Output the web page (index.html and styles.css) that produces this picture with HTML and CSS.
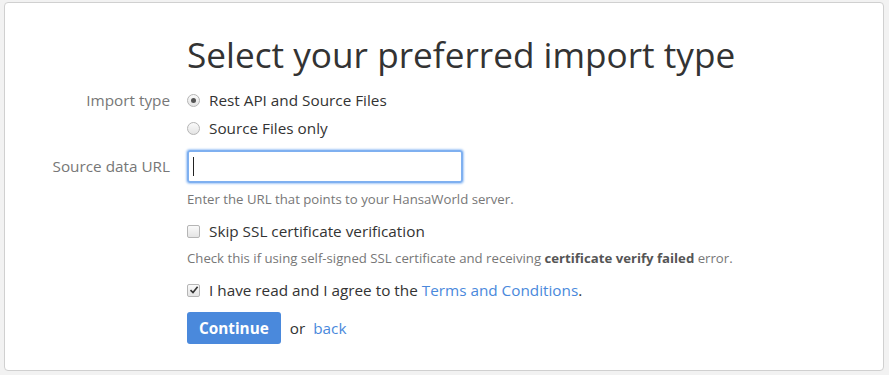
FILE: index.html
```html
<!doctype html>
<html lang="en">
<head>
    <meta charset="UTF-8">
    <meta name="viewport" content="width=device-width, initial-scale=1.0">
    <title>Import type</title>
    <link rel="stylesheet" href="styles.css">
</head>
<body>
    <div class="card">
        <form class="import-form">
            <div class="row">
                <div class="label"></div>
                <h1 class="title">Select your preferred import type</h1>
            </div>

            <div class="row">
                <div class="label label-choice">Import type</div>
                <div class="controls">
                    <label class="choice"><span class="radio checked"></span>Rest API and Source Files</label>
                    <label class="choice"><span class="radio"></span>Source Files only</label>
                </div>
            </div>

            <div class="row row-input">
                <div class="label label-input">Source data URL</div>
                <div class="controls">
                    <div class="text-input"><span class="caret"></span></div>
                    <p class="help">Enter the URL that points to your HansaWorld server.</p>
                </div>
            </div>

            <div class="row">
                <div class="label"></div>
                <div class="controls">
                    <label class="choice"><span class="checkbox"></span>Skip SSL certificate verification</label>
                    <p class="help help-after">Check this if using self-signed SSL certificate and receiving <b>certificate verify failed</b> error.</p>
                </div>
            </div>

            <div class="row">
                <div class="label"></div>
                <div class="controls">
                    <label class="choice"><span class="checkbox">
                        <svg width="10" height="10" viewBox="0 0 10 10"><path d="M1.5 5.2 L4 7.6 L8.6 1.8" fill="none" stroke="#333" stroke-width="1.6"/></svg>
                    </span>I have read and I agree to the&nbsp;<a href="#">Terms and Conditions</a>.</label>
                    <div class="actions">
                        <a href="#" class="button">Continue</a>
                        <span class="or">or</span>
                        <a href="#">back</a>
                    </div>
                </div>
            </div>
        </form>
    </div>
</body>
</html>
```

FILE: styles.css
```css
body {
    margin: 0;
    padding: 2px 5px 4px 4px;
    background-color: #f2f2f2;
    font-family: "Open Sans", sans-serif;
    color: #333;
}

.card {
    background-color: #fff;
    border: 1px solid #d0d0d0;
    border-radius: 4px;
    height: 367px;
}

.import-form {
    display: flex;
    flex-direction: column;
}

.row {
    display: grid;
    grid-template-columns: 165px 1fr;
    column-gap: 17px;
}

.label {
    text-align: right;
    color: #777;
    font-size: 15.3px;
    line-height: 20px;
}

.label-choice {
    line-height: 28px;
}

.title {
    margin: 29px 0 10px 0;
    font-size: 35.2px;
    font-weight: 400;
    line-height: 44px;
    color: #333;
}

.controls {
    display: flex;
    flex-direction: column;
    align-items: flex-start;
}

.choice {
    display: flex;
    align-items: center;
    font-size: 15.3px;
    line-height: 20px;
    height: 28px;
}

.radio {
    width: 11px;
    height: 11px;
    border: 1px solid #b5b5b5;
    border-radius: 50%;
    background: linear-gradient(#fafafa, #e4e4e4);
    margin-right: 9px;
    display: flex;
    align-items: center;
    justify-content: center;
}

.radio.checked::after {
    content: "";
    width: 5px;
    height: 5px;
    border-radius: 50%;
    background-color: #555;
}

.checkbox {
    width: 11px;
    height: 11px;
    border: 1px solid #b5b5b5;
    border-radius: 2px;
    background: linear-gradient(#fafafa, #e4e4e4);
    margin-right: 9px;
    display: flex;
    align-items: center;
    justify-content: center;
}

.row-input {
    margin-top: 8px;
}

.label-input {
    line-height: 33px;
}

.text-input {
    width: 268px;
    height: 29px;
    border: 2px solid #7fb0f0;
    border-radius: 3px;
    box-shadow: 0 0 2px 1px #a9cbf7;
    display: flex;
    align-items: center;
    padding-left: 4px;
}

.caret {
    width: 1px;
    height: 19px;
    background-color: #222;
}

.help {
    margin: 7px 0 9px 0;
    font-size: 13.2px;
    line-height: 18px;
    color: #777;
}

.help-after {
    margin-top: 4px;
}

.help b {
    color: #555;
}

a {
    color: #4a89dc;
    text-decoration: none;
}

.actions {
    display: flex;
    align-items: center;
    gap: 8px;
    margin-top: 8px;
    font-size: 15.3px;
}

.button {
    background-color: #4a89dc;
    color: #fff;
    font-weight: 700;
    padding: 6px 12px;
    border-radius: 3px;
    line-height: 20px;
    font-size: 15.3px;
}

.or {
    color: #333;
    margin-left: 1px;
}
```
